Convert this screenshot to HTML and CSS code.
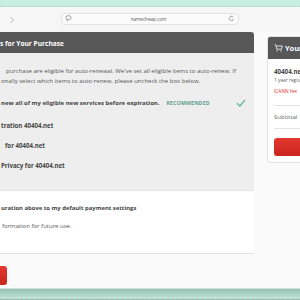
FILE: index.html
```html
<!DOCTYPE html>
<html lang="en">
<head>
    <meta charset="UTF-8">
    <meta name="viewport" content="width=device-width, initial-scale=1.0">
    <title>Namecheap - Checkout</title>
    <link rel="stylesheet" href="styles.css">
</head>
<body>
    <div class="desk-top"></div>

    <!-- browser toolbar -->
    <div class="toolbar">
        <svg class="nav-fwd" width="6" height="8" viewBox="0 0 6 8"><polyline points="1.5,1 4.5,4 1.5,7" fill="none" stroke="#b9b9b9" stroke-width="1"/></svg>
        <div class="url">
            <svg class="url-icon" width="7" height="7" viewBox="0 0 7 7"><rect x="1" y="0.8" width="5" height="3.8" rx="1.6" fill="none" stroke="#8a8a8a" stroke-width="0.8"/><line x1="2.4" y1="4.6" x2="2.4" y2="6.4" stroke="#8a8a8a" stroke-width="0.8"/></svg>
            <span class="url-text">namecheap.com</span>
            <svg class="url-reload" width="7" height="7" viewBox="0 0 7 7"><path d="M5.6 3.6 A2.2 2.2 0 1 1 4.4 1.6" fill="none" stroke="#8a8a8a" stroke-width="0.7"/><polyline points="3.8,0.7 4.7,1.6 3.8,2.4" fill="none" stroke="#8a8a8a" stroke-width="0.7"/></svg>
        </div>
    </div>

    <div class="page">
        <!-- auto renew options -->
        <section class="card options">
            <div class="card-head">
                <h2>s for Your Purchase</h2>
            </div>
            <div class="card-body">
                <p class="intro">
                    <span class="l1">purchase are eligible for auto-renewal. We've set all eligible items to auto-renew. If</span>
                    <span class="l2">onally select which items to auto-renew, please uncheck the box below.</span>
                </p>
                <div class="opt opt-main">
                    <span class="opt-label">new all of my eligible new services before expiration.</span>
                    <span class="tag">RECOMMENDED</span>
                    <svg class="check" width="10" height="8" viewBox="0 0 10 8"><polyline points="1,4.2 3.8,7 9,1" fill="none" stroke="#63b5a3" stroke-width="1.3"/></svg>
                </div>
                <div class="opt opt-item"><span class="opt-label">tration 40404.net</span></div>
                <div class="opt opt-item shift"><span class="opt-label">for 40404.net</span></div>
                <div class="opt opt-item"><span class="opt-label">Privacy for 40404.net</span></div>
            </div>
            <div class="card-save">
                <p class="save-title">uration above to my default payment settings</p>
                <p class="save-note">formation for future use.</p>
            </div>
            <div class="card-foot">
                <button class="btn btn-left" type="button">Continue</button>
            </div>
        </section>

        <!-- cart summary -->
        <aside class="card cart">
            <div class="cart-head">
                <svg class="cart-icon" width="9" height="8" viewBox="0 0 9 8"><polyline points="0.5,0.8 1.8,0.8 2.8,5.2 7.4,5.2 8.3,2 2.2,2" fill="none" stroke="#fff" stroke-width="0.8"/><circle cx="3.2" cy="6.9" r="0.6" fill="#fff"/><circle cx="7" cy="6.9" r="0.6" fill="#fff"/></svg>
                <span>Your Cart</span>
            </div>
            <div class="cart-body">
                <p class="cart-name">40404.net</p>
                <p class="cart-term">1 year registration</p>
                <p class="cart-fee">ICANN fee</p>
                <div class="cart-rule"></div>
                <p class="cart-sub">Subtotal</p>
                <div class="cart-rule"></div>
                <button class="btn btn-cart" type="button">Confirm Order</button>
            </div>
        </aside>
    </div>

    <div class="desk-bottom"></div>
</body>
</html>
```

FILE: styles.css
```css
body {
    margin: 0;
    padding: 0;
    width: 300px;
    height: 300px;
    overflow: hidden;
    font-family: "Open Sans", Arial, sans-serif;
    background-color: #fafafa;
    color: #444444;
}

p {
    margin: 0;
}

.desk-top {
    height: 6px;
    background-color: #c6efe1;
    border-bottom: 1px dotted #b4cfc6;
}

.toolbar {
    height: 25px;
    display: flex;
    align-items: center;
    background-color: #f6f6f6;
}

.nav-fwd {
    margin-left: 9px;
    margin-top: 1px;
}

.url {
    margin-left: 46px;
    width: 176px;
    height: 10px;
    display: flex;
    align-items: center;
    border: 1px solid #e2e2e2;
    border-radius: 4px;
    background-color: #fbfbfb;
    margin-top: -2px;
}

.url-icon {
    margin-left: 3px;
}

.url-text {
    flex: 1;
    text-align: center;
    font-size: 4.6px;
    color: #555555;
    padding-right: 3px;
}

.url-reload {
    margin-right: 3px;
}

.page {
    height: 256px;
    display: flex;
    align-items: flex-start;
}

/* left card */
.options {
    width: 254px;
    flex-shrink: 0;
}

.card-head {
    height: 21px;
    background-color: #575757;
    border-top-right-radius: 3px;
}

.card-head h2 {
    margin: 0;
    padding-top: 2px;
    line-height: 19px;
    font-size: 6.6px;
    font-weight: 700;
    color: #ffffff;
}

.card-body {
    background-color: #eeeeee;
    padding: 13px 0 15px;
}

.intro {
    font-size: 6px;
    line-height: 10px;
    color: #555555;
}

.intro span {
    display: block;
    white-space: nowrap;
}

.intro .l1 {
    padding-left: 6px;
}

.intro .l2 {
    padding-left: 1px;
}

.opt {
    display: flex;
    align-items: center;
    height: 20px;
    font-size: 6.1px;
    font-weight: 700;
    color: #444444;
    white-space: nowrap;
}

.opt-label {
    padding-left: 1px;
}

.opt-main {
    margin-top: 7px;
}

.opt-main .opt-label {
    font-size: 6px;
}

.opt-main + .opt-item {
    margin-top: 2px;
}

.opt-item.shift .opt-label {
    padding-left: 5px;
}

.tag {
    margin-left: 7px;
    font-size: 5.1px;
    letter-spacing: 0.25px;
    color: #5b9c8b;
}

.check {
    margin-left: auto;
    margin-right: 8px;
}

.card-save {
    background-color: #ffffff;
    border-top: 1px solid #e4e4e4;
    border-bottom: 1px solid #e4e4e4;
    padding: 12px 0 22px;
    white-space: nowrap;
}

.save-title {
    font-size: 5.9px;
    font-weight: 700;
    line-height: 10px;
    padding-left: 1px;
    color: #444444;
}

.save-note {
    margin-top: 8px;
    font-size: 6px;
    line-height: 10px;
    padding-left: 2px;
    color: #555555;
}

.card-foot {
    padding-top: 12px;
}

.btn {
    display: block;
    border: none;
    border-radius: 3px;
    background: linear-gradient(#e2382f, #c9261f);
    color: #ffffff;
    font-family: inherit;
    font-size: 6px;
    font-weight: 700;
    padding: 0;
    height: 19px;
    cursor: pointer;
}

.btn-left {
    width: 60px;
    margin-left: -53px;
    color: transparent;
}

/* cart card */
.cart {
    margin-left: 13px;
    margin-top: 4px;
    width: 130px;
    flex-shrink: 0;
    background-color: #ffffff;
    border: 1px solid #e3e3e3;
    border-radius: 3px;
}

.cart-head {
    height: 22px;
    display: flex;
    align-items: center;
    gap: 2px;
    padding-left: 6px;
    background-color: #575757;
    border-radius: 2px 2px 0 0;
    color: #ffffff;
    font-size: 7.4px;
    font-weight: 700;
    white-space: nowrap;
}

.cart-body {
    padding: 9px 0 6px 6px;
    white-space: nowrap;
}

.cart-name {
    font-size: 6.2px;
    font-weight: 700;
    line-height: 8px;
    color: #444444;
}

.cart-term {
    font-size: 4.8px;
    line-height: 9px;
    color: #666666;
}

.cart-fee {
    margin-top: 1px;
    font-size: 4.8px;
    line-height: 10px;
    color: #d9332b;
}

.cart-rule {
    height: 1px;
    background-color: #e4e4e4;
    margin-top: 9px;
}

.cart-sub {
    margin-top: 6px;
    font-size: 6px;
    line-height: 10px;
    color: #666666;
}

.cart-sub + .cart-rule {
    margin-top: 6px;
}

.btn-cart {
    margin-top: 9px;
    width: 100%;
    height: 18px;
}

.desk-bottom {
    height: 12px;
    background: linear-gradient(#93c2b2, #c3e4d8);
    border-top: 1px solid #d8dcdb;
    border-bottom: 1px dashed #9fb5ad;
    box-sizing: border-box;
}
```
